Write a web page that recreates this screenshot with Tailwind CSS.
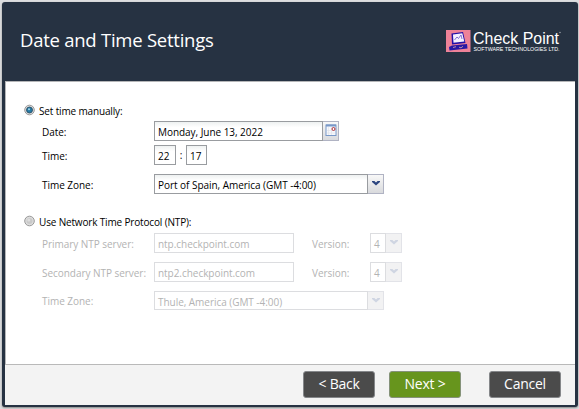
<!DOCTYPE html>
<html lang="en">
<head>
<meta charset="utf-8">
<title>Date and Time Settings</title>
<script src="https://cdn.jsdelivr.net/npm/@tailwindcss/browser@4"></script>
</head>
<body class="h-[409px] w-[579px] overflow-hidden bg-[#dcdddf] pt-[2px] pl-[2px] font-['Open_Sans',sans-serif]">
<svg class="hidden">
  <symbol id="chev" viewBox="0 0 8 6"><path d="M0 1h2.400L4 2.500 5.600 1H8v1L4 5.600 0 2z" fill="currentColor"/></symbol>
</svg>
<div class="flex h-[405px] w-[576px] flex-col rounded-[3px] bg-[#263242] px-[3px] pb-[3px] shadow-[0_1px_2px_#888]">
  <header class="flex h-[79px] shrink-0 items-start justify-between pr-[12px] pl-[15px]">
    <h1 class="mt-[25px] text-[18.5px] leading-[26px] tracking-[-0.25px] whitespace-nowrap text-white">Date and Time Settings</h1>
    <svg class="mt-[27px] h-[30px] w-[118px] overflow-visible" viewBox="0 0 118 30">
      <rect x="1" y="1" width="24.500" height="22" fill="#ee8298"/>
      <path d="M6.500 4.500L18 3l2.500 11L7 15.500z" fill="#2410a8"/>
      <path d="M8 5.500L17.300 4.300l2 8.200L8.500 13.800z" fill="#f4f0ff"/>
      <path d="M9.500 11l2.500-3 1.500 1.500L16 6l1 4" fill="none" stroke="#7766ce" stroke-width=".9"/>
      <path d="M4 18l3-1.500 15-1.500.5 4.500L4.500 21.500z" fill="#2818a4"/>
      <path d="M8 18.500l3-.8M14 18.200l2 .6 2-1.500" stroke="#c99aa8" stroke-width=".9" fill="none"/>
      <text x="28" y="15" font-family="Liberation Sans, sans-serif" font-size="17" fill="#fff" textLength="86" lengthAdjust="spacingAndGlyphs">Check Point</text>
      <text x="28.500" y="21.700" font-family="Liberation Sans, sans-serif" font-size="5.500" fill="#fff" textLength="86" lengthAdjust="spacingAndGlyphs">SOFTWARE TECHNOLOGIES LTD.</text>
      <circle cx="115" cy="3.500" r=".7" fill="#aab0b8"/>
    </svg>
  </header>
  <main class="flex h-[283px] shrink-0 flex-col border-t border-l border-[#b5b6b8] bg-white pt-[21px] pl-[18px] text-[10px] leading-[16px] tracking-[-0.04px] whitespace-nowrap text-black">
    <div class="flex h-[16px] items-center">
      <svg class="mt-[-3px] h-[12px] w-[11px]" viewBox="0 0 11 12"><circle cx="5.500" cy="6" r="4.800" fill="#ddd" stroke="#999"/><circle cx="5.500" cy="6" r="3" fill="#247aa5" stroke="#24455b" stroke-width=".8"/><circle cx="5" cy="5.300" r="1" fill="#9fd7ef"/></svg>
      <span class="ml-[4px] tracking-[-0.15px]">Set time manually:</span>
    </div>
    <div class="mt-[2px] flex h-[20px] pl-[18px]">
      <span class="w-[112px] pt-[3px]">Date:</span>
      <div class="w-[169px] border border-[#999ca0] bg-linear-to-b from-[#eef1f1] to-white to-30% pt-[2px] pl-[3px]">Monday, June 13, 2022</div>
      <div class="flex w-[16px] justify-center border border-l-0 border-[#b0b3c3] bg-linear-to-b from-[#f8f8f8] to-[#d9dadd] pt-[2px]">
        <svg class="h-[13px] w-[12px]" viewBox="0 0 12 13"><rect x="1" y="1" width="10" height="10.500" fill="#f7f8fc" stroke="#7898c8"/><path d="M1 1.500h10" stroke="#7898c8" stroke-width="2"/><path d="M3.500 3v8M6.500 3v8M2 6.500h8M2 9h8" stroke="#dde0e8" stroke-width=".6"/><circle cx="8.500" cy="5" r="1.500" fill="#fff" stroke="#b02c34"/></svg>
      </div>
    </div>
    <div class="mt-[4px] flex h-[20px] pl-[18px]">
      <span class="w-[112px] pt-[3px]">Time:</span>
      <div class="w-[22px] border border-[#999ca0] bg-linear-to-b from-[#eef1f1] to-white to-30% pt-[2px] pl-[3px]">22</div>
      <span class="w-[10px] pt-[2px] text-center">:</span>
      <div class="w-[21px] border border-[#999ca0] bg-linear-to-b from-[#eef1f1] to-white to-30% pt-[2px] pl-[3px]">17</div>
    </div>
    <div class="mt-[9px] flex h-[20px] pl-[18px]">
      <span class="w-[112px] pt-[3px]">Time Zone:</span>
      <div class="w-[214px] border border-[#999ca0] bg-linear-to-b from-[#eef1f1] to-white to-30% pt-[2px] pl-[3px]">Port of Spain, America (GMT -4:00)</div>
      <div class="flex w-[16px] justify-center border border-l-0 border-[#b0b3c3] bg-linear-to-b from-[#f8f8f8] to-[#d9dadd] pt-[5px] text-[#2d4680]"><svg class="h-[6px] w-[8px]"><use href="#chev"/></svg></div>
    </div>
    <div class="mt-[20px] flex h-[16px] items-center">
      <svg class="mt-[-2px] h-[12px] w-[11px]" viewBox="0 0 11 12"><circle cx="5.500" cy="6" r="4.800" fill="#ddd" stroke="#999"/><circle cx="5.500" cy="6" r="3" fill="#c9c9c9"/><circle cx="4.800" cy="5" r="1.500" fill="#dedede"/></svg>
      <span class="ml-[4px] tracking-[-0.16px]">Use Network Time Protocol (NTP):</span>
    </div>
    <div class="mt-[3px] flex h-[20px] pl-[18px] text-[#b3b3b3]">
      <span class="w-[112px] pt-[3px]">Primary NTP server:</span>
      <div class="w-[140px] border border-[#dcdde0] pt-[2px] pl-[3px]">ntp.checkpoint.com</div>
      <span class="w-[76px] pt-[3px] pl-[18px]">Version:</span>
      <div class="w-[16px] border border-[#dcdde0] pt-[2px] pl-[3px]">4</div>
      <div class="flex w-[16px] justify-center border border-l-0 border-[#e2e3e8] bg-[#f2f2f3] pt-[5px] text-[#cfd5e2]"><svg class="h-[6px] w-[8px]"><use href="#chev"/></svg></div>
    </div>
    <div class="mt-[9px] flex h-[20px] pl-[18px] text-[#b3b3b3]">
      <span class="w-[112px] pt-[3px]">Secondary NTP server:</span>
      <div class="w-[140px] border border-[#dcdde0] pt-[2px] pl-[3px]">ntp2.checkpoint.com</div>
      <span class="w-[76px] pt-[3px] pl-[18px]">Version:</span>
      <div class="w-[16px] border border-[#dcdde0] pt-[2px] pl-[3px]">4</div>
      <div class="flex w-[16px] justify-center border border-l-0 border-[#e2e3e8] bg-[#f2f2f3] pt-[5px] text-[#cfd5e2]"><svg class="h-[6px] w-[8px]"><use href="#chev"/></svg></div>
    </div>
    <div class="mt-[9px] flex h-[19px] pl-[18px] text-[#b3b3b3]">
      <span class="w-[112px] pt-[2px]">Time Zone:</span>
      <div class="w-[214px] border border-[#dcdde0] pt-[2px] pl-[3px]">Thule, America (GMT -4:00)</div>
      <div class="flex w-[16px] justify-center border border-l-0 border-[#e2e3e8] bg-[#f2f2f3] pt-[5px] text-[#cfd5e2]"><svg class="h-[6px] w-[8px]"><use href="#chev"/></svg></div>
    </div>
  </main>
  <footer class="flex h-[41px] shrink-0 justify-end border-t border-[#b9b9b9] bg-[#f3f3f3] pt-[6px] pr-[14px] text-[14px] leading-[23px] tracking-[-0.25px] text-white">
    <button class="h-[27px] w-[72px] rounded-[3px] border border-[#85878a] bg-[#4b4b4b] pb-[2px]">&lt; Back</button>
    <button class="ml-[14px] h-[27px] w-[72px] rounded-[3px] border border-[#85927a] bg-[#67951d] pb-[2px]">Next &gt;</button>
    <button class="ml-[28px] h-[27px] w-[72px] rounded-[3px] border border-[#85878a] bg-[#4b4b4b] pb-[2px]">Cancel</button>
  </footer>
</div>
</body>
</html>
